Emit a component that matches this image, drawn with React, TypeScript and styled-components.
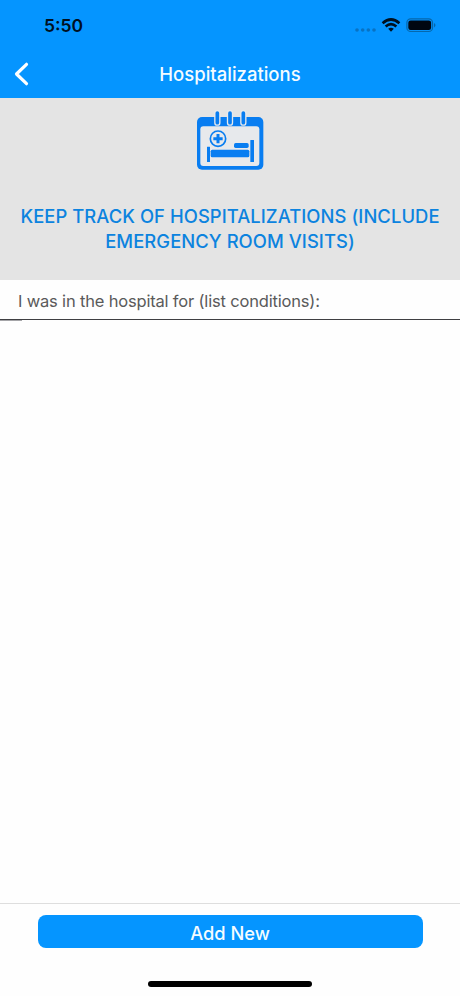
import React from "react";
import styled, { createGlobalStyle } from "styled-components";

const GlobalStyle = createGlobalStyle`
  *, *::before, *::after { box-sizing: border-box; }
  body { margin: 0; background: #fefefe; font-family: Inter, "Liberation Sans", sans-serif; }
`;

const Screen = styled.div`
  display: flex;
  flex-direction: column;
  width: 460px;
  height: 996px;
  overflow: hidden;
  background: #fefefe;
`;

const Header = styled.header`
  flex: none;
  height: 98px;
  background: #0595ff;
`;

const StatusBar = styled.div`
  display: flex;
  justify-content: space-between;
  align-items: center;
  height: 52px;
  padding: 0 23px 0 44px;
`;

const Time = styled.span`
  font-size: 17.5px;
  font-weight: 600;
  line-height: 22px;
  color: #00101f;
`;

const StatusIcons = styled.svg`
  display: block;
`;

const NavBar = styled.div`
  display: grid;
  grid-template-columns: 44px 1fr 44px;
  align-items: center;
  height: 44px;
`;

const BackButton = styled.button`
  display: flex;
  align-items: center;
  height: 44px;
  padding: 0 0 0 13px;
  border: 0;
  background: none;
`;

const Title = styled.h1`
  margin: -1px 0 0;
  font-size: 18.5px;
  font-weight: 500;
  line-height: 24px;
  text-align: center;
  color: #f4fcff;
`;

const Banner = styled.section`
  flex: none;
  display: flex;
  flex-direction: column;
  align-items: center;
  height: 182px;
  padding-top: 2px;
  background: #e4e4e4;
`;

const Heading = styled.h2`
  margin: 24px 0 0;
  font-size: 18.4px;
  font-weight: 500;
  line-height: 24.5px;
  letter-spacing: 0.06px;
  text-align: center;
  white-space: nowrap;
  color: #0c83df;
`;

const Prompt = styled.div`
  flex: none;
  display: flex;
  align-items: center;
  height: 40px;
  padding: 3px 18px 0;
  border-bottom: 1px solid #3f3f42;
  font-size: 16.5px;
  line-height: 22px;
  letter-spacing: -0.18px;
  white-space: nowrap;
  color: #5a5a5a;
`;

const List = styled.main`
  flex: 1;
`;

const Inset = styled.div`
  width: 22px;
  height: 1px;
  background: #a5a5a8;
`;

const Footer = styled.footer`
  flex: none;
  display: flex;
  flex-direction: column;
  align-items: center;
  height: 93px;
  padding-top: 11px;
  border-top: 1px solid #dedede;
`;

const AddButton = styled.button`
  width: 385px;
  height: 33px;
  padding: 3px 0 0;
  border: 0;
  border-radius: 8px;
  background: #0595ff;
  font: 500 18.3px/24px Inter, "Liberation Sans", sans-serif;
  color: #f4fcff;
`;

const HomeIndicator = styled.div`
  width: 164px;
  height: 6px;
  margin-top: 33px;
  border-radius: 3px;
  background: #000;
`;

function SystemIcons() {
  return (
    <StatusIcons width="82" height="18" viewBox="355 17 82 18" aria-hidden="true">
      <g fill="#0872c3">
        <circle cx="357" cy="30" r="1.8" />
        <circle cx="362.7" cy="30" r="1.8" />
        <circle cx="368.3" cy="30" r="1.8" />
        <circle cx="374" cy="30" r="1.8" />
      </g>
      <g fill="none" stroke="#00101f" strokeWidth="2.7">
        <path d="M382.6 23.2Q391 15.8 399.4 23.2" />
        <path d="M385.6 26.5Q391 21.9 396.4 26.5" />
      </g>
      <path d="M388.2 28.7Q391 26.6 393.8 28.7L391 31.7Z" fill="#00101f" />
      <rect x="406.9" y="18.9" width="25.6" height="12.6" rx="3.8" fill="none" stroke="#0667ac" strokeWidth="1.2" />
      <rect x="408.3" y="20.5" width="22.8" height="9.5" rx="2.3" fill="#000711" />
      <path d="M434 23v4.4q3-2.2 0-4.4" fill="#0667ac" />
    </StatusIcons>
  );
}

function HospitalCalendarIcon() {
  return (
    <svg width="90" height="80" viewBox="0 0 270 240" aria-hidden="true">
      <rect x="36" y="51" width="199" height="158" rx="15" fill="#087df1" />
      <rect x="46" y="79" width="177" height="119" rx="9" fill="#e7e9ec" />
      <g strokeLinecap="round">
        <path d="M97 39V68M135 39V68M175 39V68" stroke="#e7e9ec" strokeWidth="19" />
        <path d="M97 39V68M135 39V68M175 39V68" stroke="#087df1" strokeWidth="11" />
      </g>
      <circle cx="99" cy="116" r="23" fill="none" stroke="#087df1" strokeWidth="5" />
      <path d="M99 102V130M85 116H113" stroke="#087df1" strokeWidth="9" />
      <g fill="#087df1">
        <rect x="66" y="140" width="9" height="46" rx="1" />
        <rect x="196" y="120" width="11" height="66" rx="1" />
        <rect x="77" y="149" width="116" height="23" rx="5" />
        <rect x="147" y="129" width="44" height="15" rx="5" />
      </g>
    </svg>
  );
}

export default function App() {
  return (
    <Screen>
      <GlobalStyle />
      <Header>
        <StatusBar>
          <Time>5:50</Time>
          <SystemIcons />
        </StatusBar>
        <NavBar>
          <BackButton aria-label="Back">
            <svg width="17" height="26" viewBox="0 0 17 26" fill="none">
              <path d="M13.5 3.3L3.5 13L13.5 22.7" stroke="#fff" strokeWidth="3.2" strokeLinecap="round" strokeLinejoin="round" />
            </svg>
          </BackButton>
          <Title>Hospitalizations</Title>
        </NavBar>
      </Header>
      <Banner>
        <HospitalCalendarIcon />
        <Heading>
          KEEP TRACK OF HOSPITALIZATIONS (INCLUDE
          <br />
          EMERGENCY ROOM VISITS)
        </Heading>
      </Banner>
      <Prompt>I was in the hospital for (list conditions):</Prompt>
      <List>
        <Inset />
      </List>
      <Footer>
        <AddButton>Add New</AddButton>
        <HomeIndicator />
      </Footer>
    </Screen>
  );
}
